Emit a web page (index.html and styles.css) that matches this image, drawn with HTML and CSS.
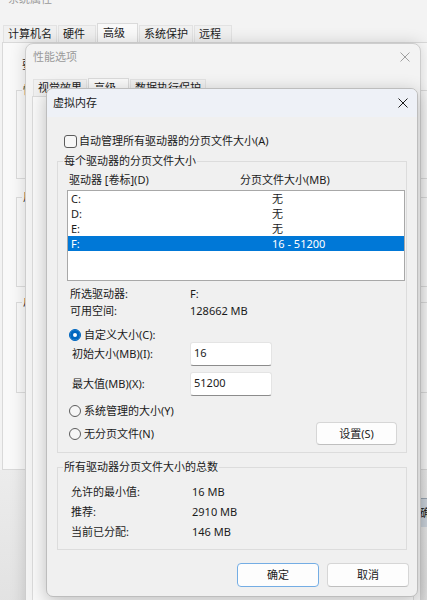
FILE: index.html
```html
<!DOCTYPE html>
<html lang="zh-CN">
<head>
    <meta charset="UTF-8">
    <meta name="viewport" content="width=device-width, initial-scale=1.0">
    <title>虚拟内存</title>
    <link rel="stylesheet" href="styles.css">
</head>
<body>
    <div class="desk">
        <!-- 系统属性 (behind) -->
        <section class="win win-sys">
            <div class="sys-title">系统属性</div>
            <div class="tabs sys-tabs">
                <span class="tab">计算机名</span>
                <span class="tab">硬件</span>
                <span class="tab active">高级</span>
                <span class="tab">系统保护</span>
                <span class="tab">远程</span>
            </div>
            <div class="sys-panel">
                <p class="sys-note">要进行大多数更改，你必须作为管理员登录。</p>
                <fieldset class="sys-group g1"><legend>性能</legend><div class="sys-group-body"></div></fieldset>
                <fieldset class="sys-group g2"><legend>用户配置文件</legend><div class="sys-group-body"></div></fieldset>
                <fieldset class="sys-group g3"><legend>启动和故障恢复</legend><div class="sys-group-body"></div></fieldset>
            </div>
            <div class="sys-foot">
                <button class="sys-btn">确定</button>
            </div>
        </section>

        <!-- 性能选项 -->
        <section class="win win-perf">
            <div class="perf-title">
                <span>性能选项</span>
                <svg class="close" width="10" height="10" viewBox="0 0 10 10"><path d="M0.5 0.5L9.5 9.5M9.5 0.5L0.5 9.5" stroke="#a0a0a0" stroke-width="1"/></svg>
            </div>
            <div class="tabs perf-tabs">
                <span class="tab">视觉效果</span>
                <span class="tab active">高级</span>
                <span class="tab">数据执行保护</span>
            </div>
            <div class="perf-panel"></div>
        </section>

        <!-- 虚拟内存 -->
        <section class="win win-vm">
            <div class="vm-title">
                <span>虚拟内存</span>
                <svg class="close" width="10" height="10" viewBox="0 0 10 10"><path d="M0.5 0.5L9.5 9.5M9.5 0.5L0.5 9.5" stroke="#1b1b1b" stroke-width="1"/></svg>
            </div>
            <div class="vm-body">
                <label class="check-row">
                    <span class="checkbox"></span>
                    <span>自动管理所有驱动器的分页文件大小(A)</span>
                </label>

                <fieldset class="group">
                    <legend>每个驱动器的分页文件大小</legend>
                    <div class="group-body">
                        <div class="list-head">
                            <span>驱动器 [卷标](D)</span>
                            <span>分页文件大小(MB)</span>
                        </div>
                        <div class="drive-list">
                            <div class="drive-row"><span>C:</span><span>无</span></div>
                            <div class="drive-row"><span>D:</span><span>无</span></div>
                            <div class="drive-row"><span>E:</span><span>无</span></div>
                            <div class="drive-row selected"><span>F:</span><span>16 - 51200</span></div>
                        </div>

                        <div class="info">
                            <span>所选驱动器:</span><span>F:</span>
                            <span>可用空间:</span><span>128662 MB</span>
                        </div>

                        <div class="radio-row first">
                            <span class="radio checked"></span>
                            <span>自定义大小(C):</span>
                        </div>
                        <div class="size-row">
                            <span>初始大小(MB)(I):</span>
                            <div class="field">16</div>
                        </div>
                        <div class="size-row second">
                            <span>最大值(MB)(X):</span>
                            <div class="field">51200</div>
                        </div>
                        <div class="radio-row sys">
                            <span class="radio"></span>
                            <span>系统管理的大小(Y)</span>
                        </div>
                        <div class="radio-row last">
                            <div class="radio-label">
                                <span class="radio"></span>
                                <span>无分页文件(N)</span>
                            </div>
                            <button class="btn btn-set">设置(S)</button>
                        </div>
                    </div>
                </fieldset>

                <fieldset class="group total">
                    <legend>所有驱动器分页文件大小的总数</legend>
                    <div class="group-body totals">
                        <span>允许的最小值:</span><span>16 MB</span>
                        <span>推荐:</span><span>2910 MB</span>
                        <span>当前已分配:</span><span>146 MB</span>
                    </div>
                </fieldset>

                <div class="actions">
                    <button class="btn btn-default">确定</button>
                    <button class="btn">取消</button>
                </div>
            </div>
        </section>
    </div>
</body>
</html>
```

FILE: styles.css
```css
* {
    box-sizing: border-box;
}

body {
    margin: 0;
    width: 427px;
    height: 600px;
    overflow: hidden;
    font-family: "Noto Sans", "Noto Sans CJK SC", sans-serif;
    font-size: 11px;
    line-height: 14px;
    color: #1b1b1b;
    background: #e6e6e6;
}

.desk {
    position: relative;
    width: 427px;
    height: 600px;
    overflow: hidden;
}

.win {
    position: absolute;
}

button {
    font: inherit;
    color: inherit;
}

/* tabs shared */
.tabs {
    display: flex;
    align-items: flex-end;
    gap: 1px;
}

.tab {
    height: 17px;
    min-width: 38px;
    padding: 0 4px;
    line-height: 16px;
    white-space: nowrap;
    background: #f0f0f0;
    border: 1px solid #e2e2e2;
    border-bottom: none;
}

.tab.active {
    height: 19px;
    min-width: 41px;
    padding: 0 5px;
    line-height: 18px;
    background: #f9f9f9;
    border-color: #dadada;
}

/* system properties */
.win-sys {
    left: 0;
    top: -20px;
    width: 470px;
    height: 620px;
    background: #f3f3f3;
}

.sys-title {
    height: 43px;
    padding: 12px 0 0 8px;
    color: #9a9a9a;
}

.sys-tabs {
    height: 19px;
    margin-left: 3px;
}

.sys-panel {
    height: 428px;
    margin-left: 2px;
    padding: 15px 0 0 13px;
    background: #f9f9f9;
    border: 1px solid #d9d9d9;
}

.sys-note {
    margin: 0;
    padding-left: 6px;
    white-space: nowrap;
}

.sys-group {
    width: 440px;
    margin: 11px 0 0;
    padding: 0;
    border: 1px solid #dcdcdc;
}

.sys-group legend {
    margin-left: 5px;
    padding: 0 1px;
}

.sys-group.g2 {
    margin-top: 11px;
}

.sys-group.g3 {
    margin-top: 8px;
}

.g1 .sys-group-body { height: 81px; }
.g2 .sys-group-body { height: 82px; }
.g3 .sys-group-body { height: 83px; }

.sys-foot {
    height: 150px;
    padding: 28px 0 0 413px;
    background: linear-gradient(#ececec, #e1e1e1);
}

.sys-btn {
    width: 60px;
    height: 29px;
    padding: 0 0 0 7px;
    text-align: left;
    background: #cdd5dd;
    border: none;
    border-top: 1px solid #9aa6b2;
}

/* performance options */
.win-perf {
    left: 25px;
    top: 43px;
    width: 396px;
    height: 600px;
    background: #f3f3f3;
    border: 1px solid #cdcdcd;
    border-radius: 8px 8px 0 0;
    box-shadow: 0 0 16px rgba(0, 0, 0, 0.16);
}

.perf-title {
    height: 34px;
    display: flex;
    justify-content: space-between;
    padding: 6px 10px 0 7px;
    color: #9a9a9a;
}

.perf-title .close {
    margin-top: 2px;
}

.perf-tabs {
    height: 18px;
    margin-left: 7px;
}

.perf-tabs .tab.active {
    height: 18px;
    line-height: 17px;
}

.perf-panel {
    height: 520px;
    margin: 0 6px;
    background: #f9f9f9;
    border: 1px solid #dadada;
}

/* virtual memory dialog */
.win-vm {
    left: 46px;
    top: 88px;
    width: 372px;
    height: 509px;
    overflow: hidden;
    background: #f0f0f0;
    border: 1px solid #bdbdbd;
    border-radius: 7px;
    box-shadow: 0 4px 18px rgba(0, 0, 0, 0.24);
}

.vm-title {
    height: 28px;
    display: flex;
    justify-content: space-between;
    align-items: center;
    padding: 0 9px 0 6px;
    background: #eef1f7;
}

.vm-body {
    padding: 0 10px;
}

.check-row {
    display: flex;
    align-items: center;
    gap: 2px;
    height: 16px;
    margin-top: 16px;
    padding-left: 7px;
}

.checkbox {
    width: 13px;
    height: 13px;
    background: #f7f7f7;
    border: 1px solid #5c5c5c;
    border-radius: 3px;
}

.group {
    margin: 5px 0 0;
    padding: 0;
    min-width: 0;
    border: 1px solid #dcdcdc;
}

.group legend {
    margin-left: 5px;
    padding: 0 1px;
    line-height: 14px;
}

.group-body {
    padding: 5px 1px 7px 9px;
}

.list-head {
    display: grid;
    grid-template-columns: 171px 1fr;
    padding-left: 2px;
}

.drive-list {
    height: 91px;
    margin-top: 3px;
    background: #fff;
    border: 1px solid #a8a8a8;
}

.drive-row {
    display: grid;
    grid-template-columns: 201px 1fr;
    height: 15px;
    line-height: 15px;
    padding-left: 3px;
}

.drive-row.selected {
    background: #0078d7;
    color: #fff;
}

.info {
    display: grid;
    grid-template-columns: 120px 1fr;
    row-gap: 3px;
    margin-top: 6px;
    padding-left: 3px;
}

.radio-row {
    display: flex;
    align-items: center;
    gap: 3px;
    height: 14px;
    padding-left: 2px;
}

.radio-row.first {
    margin-top: 10px;
}

.radio-row.sys {
    margin-top: 8px;
}

.radio-row.last {
    height: 23px;
    margin-top: 4px;
    justify-content: space-between;
    padding-right: 8px;
}

.radio-label {
    display: flex;
    align-items: center;
    gap: 3px;
}

.radio {
    width: 12px;
    height: 12px;
    flex: none;
    background: #f6f6f6;
    border: 1px solid #5c5c5c;
    border-radius: 50%;
}

.radio.checked {
    background: #0067c0;
    border-color: #0067c0;
    box-shadow: inset 0 0 0 3px #0067c0, inset 0 0 0 6px #fff;
}

.size-row {
    display: grid;
    grid-template-columns: 118px 82px;
    align-items: center;
    height: 24px;
    padding-left: 5px;
}

.size-row.second {
    margin-top: 6px;
}

.field {
    height: 24px;
    padding: 3px 3px 0;
    background: #fff;
    border: 1px solid #e4e4e4;
    border-bottom-color: #8c8c8c;
    border-radius: 3px;
}

.btn {
    width: 82px;
    height: 24px;
    padding: 0;
    background: #fdfdfd;
    border: 1px solid #d6d6d6;
    border-bottom-color: #bfbfbf;
    border-radius: 4px;
}

.btn-set {
    width: 81px;
    height: 23px;
}

.btn-default {
    border-color: #74ade4;
}

.group.total {
    margin-top: 7px;
}

.totals {
    display: grid;
    grid-template-columns: 121px 1fr;
    grid-auto-rows: 20px;
    align-items: center;
    padding: 8px 1px 7px 13px;
}

.actions {
    display: flex;
    justify-content: flex-end;
    gap: 8px;
    margin: 13px -2px 0 0;
}
```
